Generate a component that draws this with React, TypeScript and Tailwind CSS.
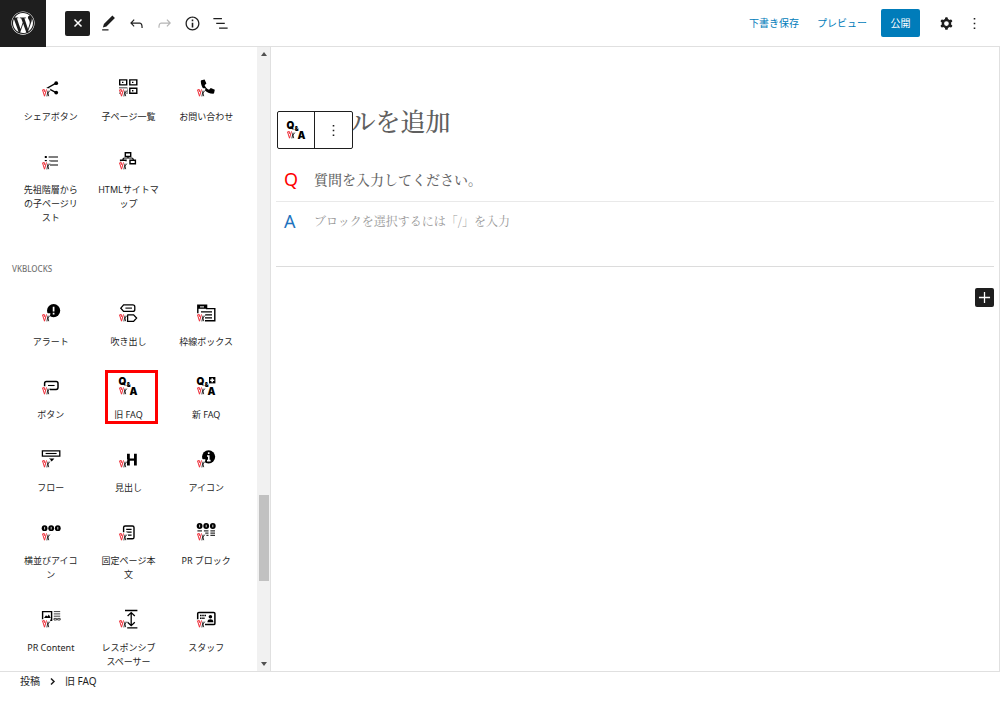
import type { ReactNode } from 'react';
import { FaWordpress } from 'react-icons/fa';

type Block = {
    name: string;
    icon: ReactNode;
    marked?: boolean;
};

function WpIcon({ d }: { d: string }) {
    return (
        <svg viewBox="0 0 24 24" className="w-[19px] h-[19px]" fill="currentColor" fillRule="evenodd" aria-hidden="true">
            <path d={d} />
        </svg>
    );
}

const paths = {
    edit: 'M20.1 5.1L16.9 2 6.2 12.7l-1.3 4.4 4.5-1.3L20.1 5.1zM4 20.8h8v-1.5H4v1.5z',
    undo: 'M18.3 11.7c-.6-.6-1.4-.9-2.3-.9H6.7l2.9-3.3-1.1-1-4.5 5L8.5 16l1-1-2.7-2.7H16c.5 0 .9.2 1.3.5 1 1 1 3.4 1 4.5v.3h1.5v-.2c0-1.5 0-4.3-1.5-5.7z',
    redo: 'M15.6 6.5l-1.1 1 2.9 3.3H8c-.9 0-1.7.3-2.3.9-1.4 1.5-1.4 4.2-1.4 5.6v.2h1.5v-.3c0-1.1 0-3.5 1-4.5.3-.3.7-.5 1.3-.5h9.2L14.5 15l1.1 1.1 4.6-4.6-4.6-5z',
    info: 'M12 3.2c-4.8 0-8.8 3.9-8.8 8.8 0 4.8 3.9 8.8 8.8 8.8 4.8 0 8.8-3.9 8.8-8.8 0-4.8-4-8.8-8.8-8.8zm0 16c-4 0-7.2-3.3-7.2-7.2C4.8 8 8 4.8 12 4.8s7.2 3.3 7.2 7.2c0 4-3.2 7.2-7.2 7.2zM11 17h2v-6h-2v6zm0-8h2V7h-2v2z',
    list: 'M13.8 5.2H3v1.5h10.8V5.2zm-3.6 12v1.5H21v-1.5H10.2zm7.2-6H6.6v1.5h10.8v-1.5z',
    cog: 'M10.289 4.836A1 1 0 0111.275 4h1.306a1 1 0 01.987.836l.244 1.466c.787.26 1.503.679 2.108 1.218l1.393-.522a1 1 0 011.216.437l.653 1.13a1 1 0 01-.23 1.273l-1.148.944a6.025 6.025 0 010 2.435l1.149.946a1 1 0 01.23 1.272l-.653 1.13a1 1 0 01-1.216.437l-1.394-.522c-.605.54-1.32.958-2.108 1.218l-.244 1.466a1 1 0 01-.987.836h-1.306a1 1 0 01-.986-.836l-.244-1.466a5.995 5.995 0 01-2.108-1.218l-1.394.522a1 1 0 01-1.217-.436l-.653-1.131a1 1 0 01.23-1.272l1.149-.946a6.026 6.026 0 010-2.435l-1.148-.944a1 1 0 01-.23-1.272l.653-1.131a1 1 0 011.217-.437l1.393.522a5.994 5.994 0 012.108-1.218l.244-1.466zM14.929 12a3 3 0 11-6 0 3 3 0 016 0z',
    more: 'M13 19h-2v-2h2v2zm0-6h-2v-2h2v2zm0-6h-2V5h2v2z',
    plus: 'M19 11.200h-6.200V5h-1.600v6.200H5v1.600h6.200V19h1.600v-6.200H19z',
};

// every VK block icon carries the small logo in its lower left corner
function VkIcon({ children }: { children?: ReactNode }) {
    return (
        <svg viewBox="0 0 20 20" className="w-5 h-5 shrink-0" fill="none" stroke="#000" strokeWidth="1.4" aria-hidden="true">
            {children}
            <path d="M0.400 10.200h9l-1.400 9H2.200z" fill="#fff" stroke="none" />
            <path d="M1.500 11.800l2 6.400 2-6.800M3 11.400l.9 2.600M1.600 11.900l1.800-.3" stroke="#ee2a35" strokeWidth="1" />
            <path d="M7 12.600L5.900 18.400M8.800 12.600L7 15l.7 3.200" strokeWidth="0.800" />
        </svg>
    );
}

function Letter({ x, y, size, children }: { x: number; y: number; size: number; children: ReactNode }) {
    return (
        <text x={x} y={y} fontSize={size} fontWeight="900" fontFamily="Inter, sans-serif" fill="#000" stroke="none">{children}</text>
    );
}

function FaqIcon({ plus }: { plus?: boolean }) {
    return (
        <VkIcon>
            <Letter x={0.6} y={8.6} size={10}>Q</Letter>
            <Letter x={8.6} y={11} size={6}>&amp;</Letter>
            <Letter x={11.6} y={18.8} size={10}>A</Letter>
            {plus && (
                <>
                    <path d="M13 1h6.400v6.400H13z" fill="#000" stroke="none" />
                    <path d="M16.200 2.200v4M14.200 4.200h4" stroke="#fff" strokeWidth="1.500" />
                </>
            )}
        </VkIcon>
    );
}

function Dots({ y }: { y: number }) {
    return (
        <>
            {[3.6, 10.2, 16.8].map((cx) => (
                <g key={cx}>
                    <circle cx={cx} cy={y} r="2.900" fill="#000" stroke="none" />
                    <path d={`M${cx} ${y - 1.3}v2.6`} stroke="#fff" strokeWidth="0.800" />
                </g>
            ))}
        </>
    );
}

const topBlocks: Block[] = [
    {
        name: 'シェアボタン',
        icon: (
            <VkIcon>
                <path d="M15 5.200L6.600 10 15 14.600" />
                <circle cx="15.200" cy="5.200" r="1.900" fill="#000" stroke="none" />
                <circle cx="15.200" cy="14.600" r="1.900" fill="#000" stroke="none" />
            </VkIcon>
        ),
    },
    {
        name: '子ページ一覧',
        icon: (
            <VkIcon>
                <path d="M1.700 1.900h7v5h-7zM11.800 1.900h7v5h-7zM1.700 10.200h7v5h-7zM11.800 10.200h7v5h-7z" />
                <path d="M4 4.400h1.400M14 4.400h1.400M14 12.700h1.400" strokeWidth="1.400" />
            </VkIcon>
        ),
    },
    {
        name: 'お問い合わせ',
        icon: (
            <VkIcon>
                <path d="M5.400 2.300L8.600 1.600 10.400 5.600 8.600 7.300c1 2.300 2.300 3.600 4.400 4.500l1.800-1.900 4 1.800-.7 3.300c-.1.500-.5.700-1 .7C10.400 15.700 4.800 10 4.800 3.200c0-.5.2-.8.6-.9z" fill="#000" stroke="none" />
            </VkIcon>
        ),
    },
    {
        name: '先祖階層からの子ページリスト',
        icon: (
            <VkIcon>
                <path d="M7.600 6h9.400M8 10h9M9 14h8" strokeWidth="1.200" />
                <path d="M3.800 6h2M3.800 9.800h2" strokeWidth="1.800" />
            </VkIcon>
        ),
    },
    {
        name: 'HTMLサイトマップ',
        icon: (
            <VkIcon>
                <path d="M7.300 1.800h5.400v3.600H7.300zM12 9.200h5.400v3.600H12zM2.600 9.200h5.400v3.600H2.600z" />
                <path d="M10 5.400v1.600M5 9c0-1.500.5-2 1.600-2h7c1.200 0 1.700.5 1.700 2" strokeWidth="1.200" />
            </VkIcon>
        ),
    },
];

const vkBlocks: Block[] = [
    {
        name: 'アラート',
        icon: (
            <VkIcon>
                <circle cx="12.600" cy="7.600" r="6.600" fill="#000" stroke="none" />
                <path d="M12.600 3.800v4.600M12.600 9.800v1.800" stroke="#fff" strokeWidth="1.700" />
            </VkIcon>
        ),
    },
    {
        name: '吹き出し',
        icon: (
            <VkIcon>
                <path d="M5.600 1.800h9.200q2 0 2 2v2.600q0 2-2 2H5.600L2.800 5.200zM9.600 11.800h6l3 3.200-3 3.400h-6z" strokeWidth="1.300" />
                <path d="M7.400 5.100h6.600" strokeWidth="1.100" />
            </VkIcon>
        ),
    },
    {
        name: '枠線ボックス',
        icon: (
            <VkIcon>
                <path d="M1.800 12V2.200h8.800v3.400h8.200v12.200H9" />
                <path d="M2 2h8.600v3.800H2z" fill="#000" stroke="none" />
                <path d="M4 3.900h4" stroke="#fff" strokeWidth="1" />
                <path d="M5 8.900h11M9 11.900h7M9 14.900h7" strokeWidth="1.100" />
            </VkIcon>
        ),
    },
    {
        name: 'ボタン',
        icon: (
            <VkIcon>
                <path d="M3.600 12V7.400q0-1.800 1.800-1.800h9.800q1.800 0 1.800 1.800v4.200q0 1.800-1.800 1.800H9" strokeWidth="1.500" />
                <path d="M7 9.500h6.600" strokeWidth="1.100" />
            </VkIcon>
        ),
    },
    { name: '旧 FAQ', icon: <FaqIcon />, marked: true },
    { name: '新 FAQ', icon: <FaqIcon plus /> },
    {
        name: 'フロー',
        icon: (
            <VkIcon>
                <path d="M1.400 1.900h17.400v5.200H1.400z" strokeWidth="1.300" />
                <path d="M4.600 4.500h11" strokeWidth="1.100" />
                <path d="M8 9.400h5.400l-2.700 3z" fill="#000" stroke="none" />
            </VkIcon>
        ),
    },
    {
        name: '見出し',
        icon: (
            <VkIcon>
                <path d="M10.400 4.800v11.600M17.400 4.800v11.600" strokeWidth="2.800" />
                <path d="M10 10.600h7.600" strokeWidth="2.200" />
            </VkIcon>
        ),
    },
    {
        name: 'アイコン',
        icon: (
            <VkIcon>
                <circle cx="12.600" cy="7.800" r="6.600" fill="#000" stroke="none" />
                <path d="M12.700 3.200v1.900M11 7h1.800v4.700M11 11.600h3.600" stroke="#fff" strokeWidth="1.600" />
            </VkIcon>
        ),
    },
    { name: '横並びアイコン', icon: <VkIcon><Dots y={6.200} /></VkIcon> },
    {
        name: '固定ページ本文',
        icon: (
            <VkIcon>
                <path d="M5.600 12V5.600q0-1.600 1.600-1.600h7.200q1.600 0 1.600 1.600v9.600q0 1.600-1.600 1.600H8.600" />
                <path d="M8.200 7.400h5.400M8.200 10.200h5.400M10 13.200h3.600" strokeWidth="1.200" />
            </VkIcon>
        ),
    },
    {
        name: 'PR ブロック',
        icon: (
            <VkIcon>
                <Dots y={4} />
                <path d="M1.400 8.800h4.600M7.900 8.800h4.600M14.400 8.800h4.600M9 11.200h3.500M14.400 11.200h4.600M10.400 13.400h2.100M14.400 13.400h4.600" stroke="#333" strokeWidth="1.300" />
            </VkIcon>
        ),
    },
    {
        name: 'PR Content',
        icon: (
            <VkIcon>
                <path d="M1.600 12V2.600h9v8.600H9" />
                <path d="M3 9l2-2.800 1.400 1.400 1.400-2.200L9.800 9z" fill="#000" stroke="none" />
                <path d="M12.800 2.600h6.400M12.800 4.900h6.400M12.800 7.200h6.400M13 9.400h2.600v1.600H13zM16.600 9.400h2.600v1.600h-2.600z" stroke="#444" strokeWidth="1" />
            </VkIcon>
        ),
    },
    {
        name: 'レスポンシブスペーサー',
        icon: (
            <VkIcon>
                <path d="M7 1.500h12.400M9.200 18.800h10.200M13.200 3.600v13M9.600 7l3.600-3.400L16.800 7M9.600 13.200l3.600 3.400 3.600-3.400" strokeWidth="1.300" />
            </VkIcon>
        ),
    },
    {
        name: 'スタッフ',
        icon: (
            <VkIcon>
                <path d="M1.700 12V4.600q0-1.200 1.200-1.200h14.800q1.200 0 1.200 1.200v9.800q0 1.200-1.200 1.200H9" strokeWidth="1.500" />
                <path d="M4 6.500h6.400M4 9.200h5" strokeDasharray="1.600 .6" strokeWidth="1.500" />
                <circle cx="14.400" cy="7.800" r="1.800" fill="#000" stroke="none" />
                <path d="M11.400 13.200c.2-2.400 1.200-3 3-3s2.800.6 3 3z" fill="#000" stroke="none" />
            </VkIcon>
        ),
    },
];

function BlockGrid({ blocks }: { blocks: Block[] }) {
    return (
        <div className="grid grid-cols-3 px-3">
            {blocks.map((block) => (
                <button key={block.name} type="button" className="relative flex flex-col items-center justify-start px-2 pt-3 pb-[15px]">
                    {block.icon}
                    <span className="mt-3 text-[9px] leading-[14px] text-center break-all">{block.name}</span>
                    {block.marked && <span className="absolute left-[15px] top-1.5 w-[53px] h-[54px] border-3 border-[#ff0000]" />}
                </button>
            ))}
        </div>
    );
}

function ToolButton({ label, d, disabled }: { label: string; d: string; disabled?: boolean }) {
    return (
        <button type="button" aria-label={label} disabled={disabled} className="flex w-7 h-7 items-center justify-center disabled:text-[#b5b5b5]">
            <WpIcon d={d} />
        </button>
    );
}

function Header() {
    return (
        <header className="flex h-[47px] shrink-0 items-center border-b border-[#e0e0e0]">
            <a href="#" aria-label="WordPress" className="flex w-[46px] h-[47px] shrink-0 items-center justify-center bg-[#1e1e1e] text-white">
                <FaWordpress className="w-6 h-6" />
            </a>
            <button type="button" aria-label="閉じる" className="ml-[19px] mr-1 flex w-[25px] h-[25px] items-center justify-center rounded-xs bg-[#1e1e1e] text-white">
                <svg viewBox="0 0 10 10" className="w-2.5 h-2.5" stroke="currentColor" strokeWidth="1.500" aria-hidden="true">
                    <path d="M1.500 1.500l7 7M8.500 1.500l-7 7" />
                </svg>
            </button>
            <ToolButton label="ツール" d={paths.edit} />
            <ToolButton label="元に戻す" d={paths.undo} />
            <ToolButton label="やり直す" d={paths.redo} disabled />
            <ToolButton label="詳細" d={paths.info} />
            <ToolButton label="リスト表示" d={paths.list} />
            <div className="ml-auto flex items-center pr-3 text-[10px]">
                <button type="button" className="mr-[18px] text-[#007cba]">下書き保存</button>
                <button type="button" className="mr-[14px] text-[#007cba]">プレビュー</button>
                <button type="button" className="mr-3 h-7 w-[39px] rounded-xs bg-[#007cba] text-white">公開</button>
                <ToolButton label="設定" d={paths.cog} />
                <ToolButton label="オプション" d={paths.more} />
            </div>
        </header>
    );
}

function Scrollbar() {
    return (
        <div className="flex w-[13px] shrink-0 flex-col items-center bg-[#f1f1f1]" aria-hidden="true">
            <div className="flex h-[14px] items-center">
                <svg viewBox="0 0 6 4" className="w-1.5 h-1"><path d="M0 4l3-4 3 4z" fill="#505050" /></svg>
            </div>
            <div className="grow-[434]" />
            <div className="w-2.5 grow-[86] bg-[#c1c1c1]" />
            <div className="grow-[76]" />
            <div className="flex h-[14px] items-center">
                <svg viewBox="0 0 6 4" className="w-1.5 h-1"><path d="M0 0l3 4 3-4z" fill="#505050" /></svg>
            </div>
        </div>
    );
}

function Editor() {
    return (
        <main className="min-w-0 flex-1 border-x border-[#e0e0e0] px-[5px] pt-[55px] font-['Noto_Serif_CJK_JP','Noto_Serif_JP','Noto_Sans_CJK_JP',serif]">
            <div className="relative">
                <h1 className="text-[25px] leading-9 font-medium text-[#5f5f5f]">タイトルを追加</h1>
                <div className="absolute left-px top-[9px] flex h-[38px] w-[76px] rounded-xs border border-[#1e1e1e] bg-white">
                    <button type="button" aria-label="旧 FAQ" className="flex w-[37px] items-center justify-center border-r border-[#1e1e1e]">
                        <FaqIcon />
                    </button>
                    <button type="button" aria-label="オプション" className="flex flex-1 items-center justify-center">
                        <WpIcon d={paths.more} />
                    </button>
                </div>
            </div>
            <dl className="mt-[18px]">
                <dt className="flex h-[46px] items-center border-b border-[#e9e9e9]">
                    <span className="w-[38px] pl-2 text-lg leading-6 font-['Noto_Sans',sans-serif] text-[#ff0000]">Q</span>
                    <span className="text-sm font-medium text-[#666]">質問を入力してください。</span>
                </dt>
                <dd className="flex h-[65px] items-start border-b border-[#dcdcdc] pt-[7px]">
                    <span className="w-[38px] pl-2 text-lg leading-6 font-['Noto_Sans',sans-serif] text-[#1e73be]">A</span>
                    <span className="text-xs leading-6 text-[#999]">ブロックを選択するには「/」を入力</span>
                </dd>
            </dl>
            <button type="button" aria-label="ブロックを追加" className="mt-[21px] ml-auto flex w-[19px] h-[19px] items-center justify-center rounded-xs bg-[#1e1e1e] text-white">
                <WpIcon d={paths.plus} />
            </button>
        </main>
    );
}

export default function App() {
    return (
        <div className="flex h-screen flex-col overflow-hidden bg-white text-[#1e1e1e] font-['Noto_Sans','Noto_Sans_CJK_JP',sans-serif]" lang="ja">
            <Header />
            <div className="flex min-h-0 flex-1">
                <aside className="flex w-[270px] shrink-0">
                    <div className="flex-1 overflow-hidden pt-[19px]">
                        <BlockGrid blocks={topBlocks} />
                        <h2 className="flex h-[51px] items-center px-3 pt-1.5 text-[8px] font-medium text-[#757575] uppercase">VKBlocks</h2>
                        <BlockGrid blocks={vkBlocks} />
                    </div>
                    <Scrollbar />
                </aside>
                <Editor />
            </div>
            <footer className="h-11 shrink-0 border-t border-[#e0e0e0]">
                <nav className="flex items-center gap-1 px-5 text-[10px] leading-[18px]">
                    <a href="#">投稿</a>
                    <svg viewBox="0 0 17 17" className="w-[17px] h-[17px]" fill="none" stroke="currentColor" strokeWidth="1.500" aria-hidden="true">
                        <path d="M7 5.500l3 3-3 3" />
                    </svg>
                    <a href="#">旧 FAQ</a>
                </nav>
            </footer>
        </div>
    );
}
